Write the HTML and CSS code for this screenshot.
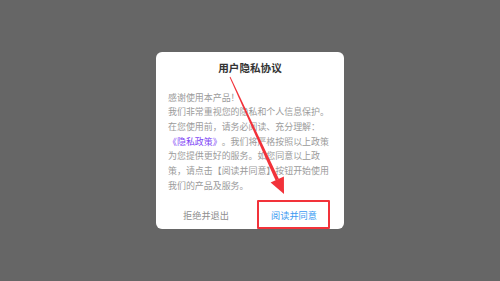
FILE: index.html
```html
<!DOCTYPE html>
<html lang="zh-CN">

<head>
  <meta charset="utf-8">

  <title>用户隐私协议</title>

  <link rel="stylesheet" href="styles.css">
</head>

<body>
  <div id="screen">
    <div class="dialog">
      <h1 class="title">用户隐私协议</h1>
      <p class="content">感谢使用本产品！<br>我们非常重视您的隐私和个人信息保护。<br>在您使用前，请务必阅读、充分理解：<br><span class="link">《隐私政策》</span>。我们将严格按照以上政策<br>为您提供更好的服务。如您同意以上政<br>策，请点击【阅读并同意】按钮开始使用<br>我们的产品及服务。</p>
      <div class="actions">
        <button class="btn refuse">拒绝并退出</button>
        <button class="btn agree">阅读并同意</button>
      </div>
    </div>

    <div class="mark-box"></div>
    <svg class="mark-arrow" width="500" height="281" viewBox="0 0 500 281">
      <polygon points="229.6,77.2 230.4,76.8 278.9,178.9 275.6,180.4" fill="#f2323a"/>
      <polygon points="270.6,182.6 283.9,176.4 284,194" fill="#f2323a"/>
    </svg>
  </div>
</body>

</html>
```

FILE: styles.css
```css
* {
  font-family: "Noto Sans CJK SC", "Noto Sans", sans-serif;
  box-sizing: border-box;
}

body {
  margin: 0;
}

#screen {
  position: relative;
  width: 500px;
  height: 281px;
  background-color: #666;
  display: flex;
  align-items: center;
  justify-content: center;
}

.dialog {
  width: 188px;
  height: 177px;
  background-color: #fff;
  border-radius: 6px;
  display: flex;
  flex-direction: column;
}

.title {
  margin: 0;
  height: 32px;
  line-height: 32px;
  font-size: 10.6px;
  font-weight: bold;
  color: #333;
  text-align: center;
}

.content {
  margin: 6.6px 0 0;
  padding: 0 6px 0 12px;
  font-size: 8.95px;
  line-height: 14.7px;
  color: #9b9b9b;
  text-align: left;
  white-space: nowrap;
  text-spacing-trim: space-all;
}

.link {
  color: #8247f5;
}

.actions {
  margin-top: auto;
  height: 28px;
  padding: 0 6px;
  display: flex;
}

.btn {
  flex: 1;
  border: none;
  background: none;
  padding: 0;
  font-size: 9.2px;
  line-height: 28px;
}

.refuse {
  color: #8f8f8f;
}

.agree {
  color: #3b9af2;
}

.mark-box {
  position: absolute;
  left: 257px;
  top: 200px;
  width: 73px;
  height: 29px;
  border: 2px solid #f2323a;
  border-radius: 1px;
}

.mark-arrow {
  position: absolute;
  left: 0;
  top: 0;
}
```
